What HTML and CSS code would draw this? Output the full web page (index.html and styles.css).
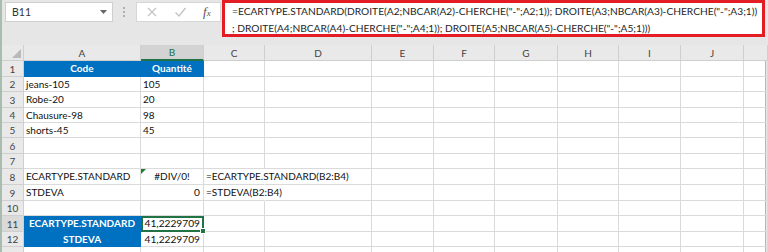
FILE: index.html
```html
<!DOCTYPE html>
<html lang="fr">
<head>
    <meta charset="UTF-8">
    <meta name="viewport" content="width=device-width, initial-scale=1.0">
    <title>ECARTYPE.STANDARD</title>
    <link rel="stylesheet" href="styles.css">
</head>
<body>
    <div class="topbar">
        <div class="namebox">
            <span>B11</span>
            <svg width="7" height="4" viewBox="0 0 7 4"><path d="M0 0h7L3.5 4z" fill="#666"/></svg>
        </div>
        <div class="grip"><i></i><i></i><i></i></div>
        <div class="fxbox">
            <svg width="12" height="12" viewBox="0 0 12 12"><path d="M2 2l8 8M10 2l-8 8" stroke="#c4c4c4" stroke-width="1.3"/></svg>
            <svg width="13" height="12" viewBox="0 0 13 12"><path d="M1.5 6.5l3.5 3.5 6.5-8" stroke="#c4c4c4" stroke-width="1.4" fill="none"/></svg>
            <span class="fx">f<small>x</small></span>
        </div>
        <div class="formula">=ECARTYPE.STANDARD(DROITE(A2;NBCAR(A2)-CHERCHE("-";A2;1)); DROITE(A3;NBCAR(A3)-CHERCHE("-";A3;1))<br>; DROITE(A4;NBCAR(A4)-CHERCHE("-";A4;1)); DROITE(A5;NBCAR(A5)-CHERCHE("-";A5;1)))</div>
    </div>

    <div class="sheet">
        <!-- en-tetes de colonnes -->
        <div class="ch corner"><svg width="9" height="9" viewBox="0 0 9 9"><path d="M9 0v9H0z" fill="#b9b9b9"/></svg></div>
        <div class="ch">A</div><div class="ch sel">B</div><div class="ch">C</div><div class="ch">D</div><div class="ch">E</div>
        <div class="ch">F</div><div class="ch">G</div><div class="ch">H</div><div class="ch">I</div><div class="ch">J</div><div class="ch"></div>

        <div class="rh">1</div><div class="c blue">Code</div><div class="c blue">Quantité</div>
        <div class="c"></div><div class="c"></div><div class="c"></div><div class="c"></div><div class="c"></div><div class="c"></div><div class="c"></div><div class="c"></div><div class="c"></div>

        <div class="rh">2</div><div class="c">jeans-105</div><div class="c">105</div>
        <div class="c"></div><div class="c"></div><div class="c"></div><div class="c"></div><div class="c"></div><div class="c"></div><div class="c"></div><div class="c"></div><div class="c"></div>

        <div class="rh">3</div><div class="c">Robe-20</div><div class="c">20</div>
        <div class="c"></div><div class="c"></div><div class="c"></div><div class="c"></div><div class="c"></div><div class="c"></div><div class="c"></div><div class="c"></div><div class="c"></div>

        <div class="rh">4</div><div class="c">Chausure-98</div><div class="c">98</div>
        <div class="c"></div><div class="c"></div><div class="c"></div><div class="c"></div><div class="c"></div><div class="c"></div><div class="c"></div><div class="c"></div><div class="c"></div>

        <div class="rh">5</div><div class="c">shorts-45</div><div class="c">45</div>
        <div class="c"></div><div class="c"></div><div class="c"></div><div class="c"></div><div class="c"></div><div class="c"></div><div class="c"></div><div class="c"></div><div class="c"></div>

        <div class="rh">6</div><div class="c"></div><div class="c"></div>
        <div class="c"></div><div class="c"></div><div class="c"></div><div class="c"></div><div class="c"></div><div class="c"></div><div class="c"></div><div class="c"></div><div class="c"></div>

        <div class="rh">7</div><div class="c"></div><div class="c"></div>
        <div class="c"></div><div class="c"></div><div class="c"></div><div class="c"></div><div class="c"></div><div class="c"></div><div class="c"></div><div class="c"></div><div class="c"></div>

        <div class="rh">8</div><div class="c">ECARTYPE.STANDARD</div><div class="c center err">#DIV/0!</div>
        <div class="c spill">=ECARTYPE.STANDARD(B2:B4)</div><div class="c"></div><div class="c"></div><div class="c"></div><div class="c"></div><div class="c"></div><div class="c"></div><div class="c"></div><div class="c"></div>

        <div class="rh">9</div><div class="c">STDEVA</div><div class="c num">0</div>
        <div class="c spill">=STDEVA(B2:B4)</div><div class="c"></div><div class="c"></div><div class="c"></div><div class="c"></div><div class="c"></div><div class="c"></div><div class="c"></div><div class="c"></div>

        <div class="rh">10</div><div class="c"></div><div class="c"></div>
        <div class="c"></div><div class="c"></div><div class="c"></div><div class="c"></div><div class="c"></div><div class="c"></div><div class="c"></div><div class="c"></div><div class="c"></div>

        <div class="rh sel">11</div><div class="c blue">ECARTYPE.STANDARD</div><div class="c num active">41,2229709</div>
        <div class="c"></div><div class="c"></div><div class="c"></div><div class="c"></div><div class="c"></div><div class="c"></div><div class="c"></div><div class="c"></div><div class="c"></div>

        <div class="rh">12</div><div class="c blue">STDEVA</div><div class="c num">41,2229709</div>
        <div class="c"></div><div class="c"></div><div class="c"></div><div class="c"></div><div class="c"></div><div class="c"></div><div class="c"></div><div class="c"></div><div class="c"></div>

        <div class="rh"></div><div class="c"></div><div class="c"></div>
        <div class="c"></div><div class="c"></div><div class="c"></div><div class="c"></div><div class="c"></div><div class="c"></div><div class="c"></div><div class="c"></div><div class="c"></div>
    </div>
</body>
</html>
```

FILE: styles.css
```css
body {
    margin: 0;
    width: 768px;
    height: 252px;
    overflow: hidden;
    background-color: #e6e6e6;
    font-family: Lato, "Liberation Sans", sans-serif;
    font-size: 10px;
    color: #1a1a1a;
    border-left: 2px solid #a9bcb0;
    box-sizing: border-box;
}
.topbar {
    height: 45px;
    display: flex;
    align-items: flex-start;
}
.namebox {
    margin: 2px 0 0 3px;
    width: 108px;
    height: 20px;
    box-sizing: border-box;
    background: white;
    border: 1px solid #cfcfcf;
    display: flex;
    align-items: center;
    justify-content: space-between;
    padding: 0 5px 0 6px;
    color: #333;
    font-size: 10.5px;
}
.grip {
    margin: 7px 0 0 10px;
    width: 2px;
    display: flex;
    flex-direction: column;
    gap: 2px;
}
.grip i {
    width: 2px;
    height: 2px;
    background: #b0b0b0;
}
.fxbox {
    margin: 2px 0 0 11px;
    width: 85px;
    height: 20px;
    box-sizing: border-box;
    background: white;
    border: 1px solid #d6d6d6;
    display: flex;
    align-items: center;
    padding-left: 9px;
    gap: 16px;
}
.fx {
    font-family: "Liberation Serif", serif;
    font-style: italic;
    font-size: 13px;
    color: #555;
}
.fx small {
    font-size: 9px;
}
.formula {
    margin-left: 1px;
    width: 543px;
    height: 37px;
    box-sizing: border-box;
    background: white;
    border: 3px solid #e41d25;
    padding: 0 0 0 7px;
    line-height: 16.5px;
    font-size: 10.2px;
    white-space: nowrap;
    overflow: hidden;
    color: #1e1e1e;
}
.sheet {
    display: grid;
    grid-template-columns: 22px 117px 63px 61px 107px 62px 61px 63px 61px 62px 63px 24px;
    grid-template-rows: 16px 16px 15px 16px 15px 15px 16px 15px 16px 16px 15px 16px 15px 16px;
    width: 766px;
    background: white;
    border-right: 1px solid #b8b8b8;
    margin-left: -2px;
    padding-left: 2px;
    box-sizing: border-box;
}
.ch, .rh {
    background: #e9e9e9;
    color: #444;
    border-right: 1px solid #cfcfcf;
    border-bottom: 1px solid #cfcfcf;
    box-sizing: border-box;
    display: flex;
    align-items: center;
    justify-content: center;
}
.corner {
    align-items: flex-end;
    justify-content: flex-end;
    padding: 0 2px 2px 0;
}
.ch.sel {
    background: #d3d3d3;
    color: #217346;
    border-bottom: 2px solid #217346;
}
.rh.sel {
    background: #dadada;
}
.c {
    border-right: 1px solid #dadada;
    border-bottom: 1px solid #dadada;
    box-sizing: border-box;
    padding: 0 2px;
    line-height: 15px;
    white-space: nowrap;
    color: #111;
}
.blue {
    background: #0070c0;
    color: white;
    font-weight: bold;
    text-align: center;
    border-color: #0070c0;
}
.num {
    text-align: right;
    font-size: 10.2px;
    padding-right: 3px;
}
.center {
    text-align: center;
}
.spill {
    border-right-color: transparent;
    overflow: visible;
    z-index: 1;
}
.err {
    position: relative;
}
.err::before {
    content: "";
    position: absolute;
    left: 0;
    top: 0;
    border-top: 5px solid #1e7b34;
    border-right: 5px solid transparent;
}
.active {
    position: relative;
    outline: 2px solid #217346;
    outline-offset: -2px;
}
.active::after {
    content: "";
    position: absolute;
    right: -3px;
    bottom: -3px;
    width: 4px;
    height: 4px;
    background: #217346;
    border: 1px solid white;
}
```
